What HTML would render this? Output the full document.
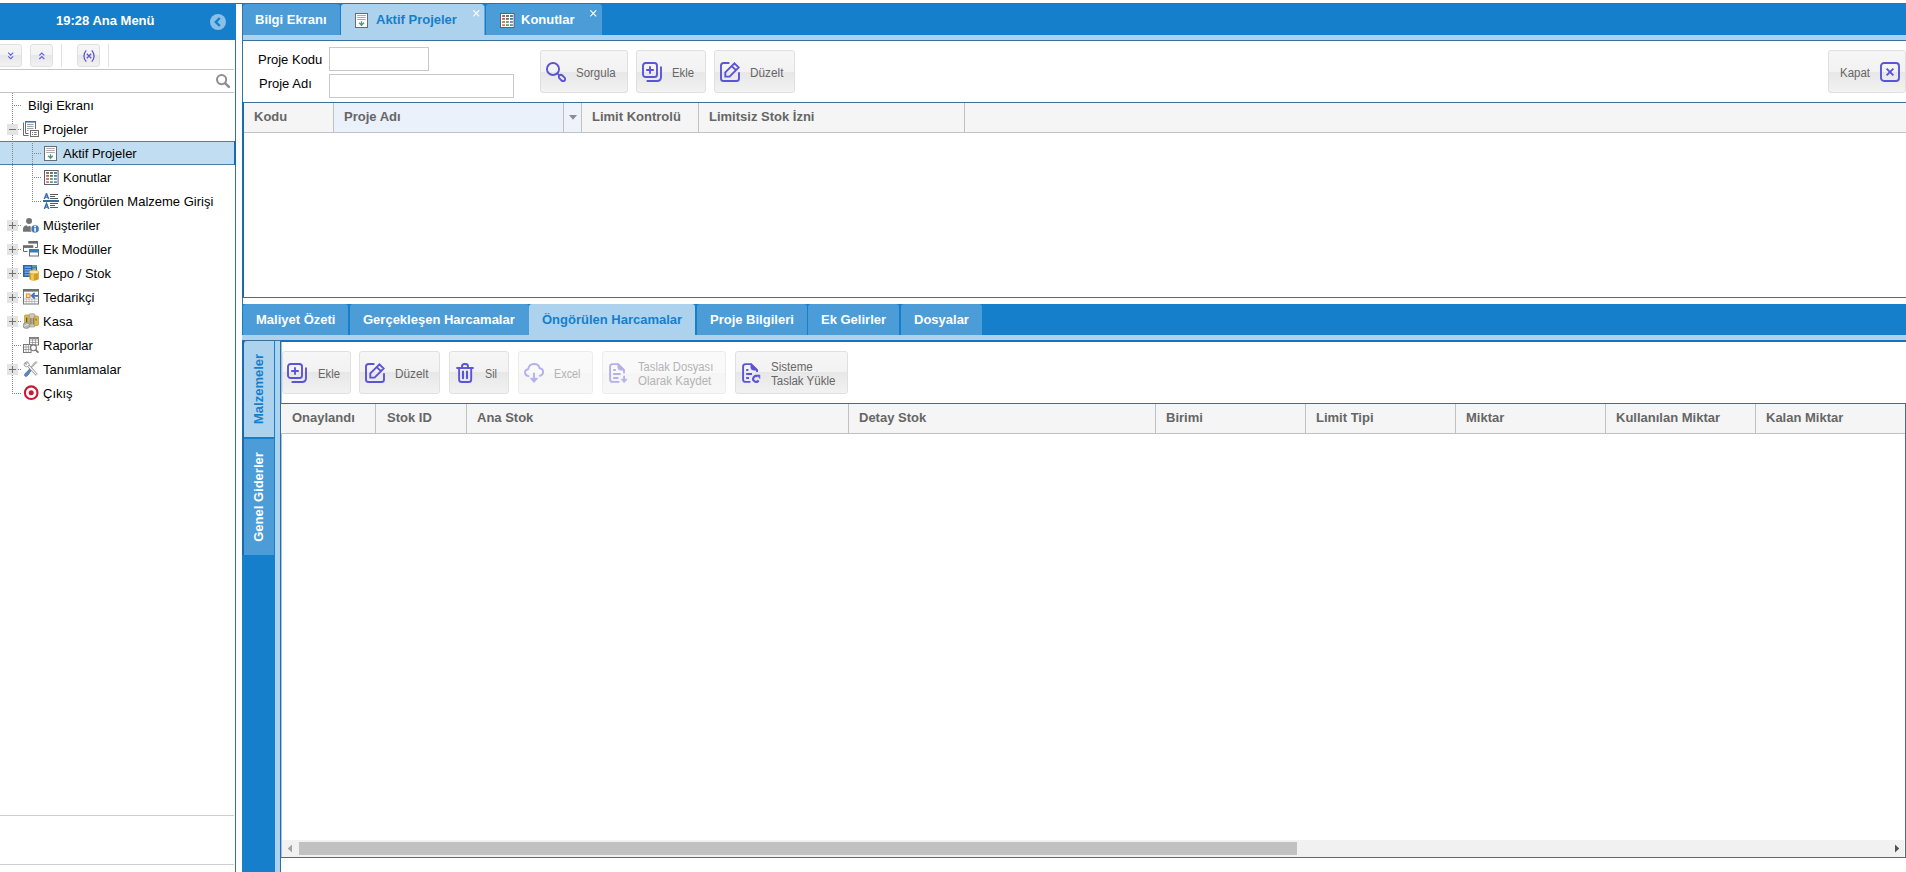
<!DOCTYPE html>
<html><head><meta charset="utf-8">
<style>
*{box-sizing:border-box;margin:0;padding:0}
html,body{width:1906px;height:872px;overflow:hidden;background:#fff;font-family:"Liberation Sans",sans-serif;font-size:13px;color:#000}
.a{position:absolute}
.blue{background:#157fcc}
.t13b{font-weight:bold;font-size:13px;line-height:16px;white-space:nowrap}
.tab{position:absolute;border-radius:3px 3px 0 0;background:#4b9cd7;color:#fff;font-weight:bold;font-size:13px;line-height:16px;white-space:nowrap}
.tab.act{background:#add2ed;color:#157fcc}
.tab span{position:absolute;top:8px}
.btn{position:absolute;border:1px solid #e0e0e0;border-radius:3px;background:linear-gradient(#f6f6f6 0,#f2f2f2 50%,#e7e7e7 50%,#f2f2f2 100%);height:43px}
.btn .tx{position:absolute;transform-origin:0 0;font-size:12px;color:#666;white-space:nowrap;line-height:13px}
.btn svg{position:absolute}
.btn.dis{background:linear-gradient(#fafafa 0,#f9f9f9 50%,#f5f5f5 51%,#f7f7f7 100%);border-color:#ececec}.btn.dis .tx{color:#b3b3b3}
.gh{position:absolute;background:#f5f5f5;border-top:1px solid #3b709a;border-bottom:1px solid #c1c1c1;height:31px}
.gh .c{position:absolute;top:0;height:29px;border-right:1px solid #c1c1c1;color:#666;font-weight:bold;font-size:13px;line-height:16px;padding:6px 0 0 10px;white-space:nowrap}
.tr{position:absolute;left:0;width:235px;height:24px;font-size:13px;line-height:16px;white-space:nowrap}
.tr .tx{position:absolute;top:5px}
.tr svg{position:absolute;top:4px}
.exp{position:absolute;left:7px;top:7px;width:11px;height:11px;background:#e4e4e4}
.exp:before{content:"";position:absolute;left:2px;top:5px;width:7px;height:1px;background:#707070}
.exp.plus:after{content:"";position:absolute;left:5px;top:2px;width:1px;height:7px;background:#707070}
.dv{position:absolute;width:1px;background-image:linear-gradient(#858585 50%,transparent 50%);background-size:1px 2px}
.dh{position:absolute;height:1px;background-image:linear-gradient(90deg,#858585 50%,transparent 50%);background-size:2px 1px}
.inp{position:absolute;border:1px solid #c9c9c9;background:#fff;height:24px}
</style></head><body>

<!-- LEFT PANEL -->
<div class="a blue" style="left:0;top:3px;width:236px;height:37px"></div>
<div class="a t13b" style="left:56px;top:13px;color:#fff">19:28 Ana Menü</div>
<svg class="a" style="left:210px;top:14px" width="16" height="16" viewBox="0 0 16 16"><circle cx="8" cy="8" r="8" fill="#8abfe6"/><path d="M9.8 4 L5.8 8 L9.8 12" fill="none" stroke="#157fcc" stroke-width="2.4"/></svg>
<div class="a" style="left:235px;top:40px;width:1px;height:832px;background:#3b709a"></div>
<div class="a" style="left:234px;top:141px;width:2px;height:24px;background:#186ab2"></div>
<!-- left toolbar -->
<div class="a" style="left:0;top:69px;width:234px;height:1px;background:#c6c6c6"></div>
<div class="btn" style="left:-2px;top:44px;width:24px;height:23px"></div>
<div class="btn" style="left:30px;top:44px;width:23px;height:23px"></div>
<div class="btn" style="left:77px;top:44px;width:23px;height:23px"></div>
<div class="a" style="left:61px;top:44px;width:1px;height:23px;background:#e1e1e1"></div>
<div class="a" style="left:108px;top:44px;width:1px;height:23px;background:#e1e1e1"></div>
<svg class="a" style="left:5px;top:50px" width="12" height="12" viewBox="0 0 12 12" fill="none" stroke="#655fe0" stroke-width="1.15"><path d="M3.2 2.7 L5.7 5.1 L8.2 2.7 M3.2 6.3 L5.7 8.7 L8.2 6.3"/></svg>
<svg class="a" style="left:36px;top:50px" width="12" height="12" viewBox="0 0 12 12" fill="none" stroke="#655fe0" stroke-width="1.15"><path d="M3.3 5.4 L5.8 3 L8.3 5.4 M3.3 9 L5.8 6.6 L8.3 9"/></svg>
<svg class="a" style="left:82px;top:49px" width="14" height="14" viewBox="0 0 14 14" fill="none" stroke="#5b55d6" stroke-width="1.25"><path d="M4.2 1.3 Q-.4 7 4.2 12.7 M9.8 1.3 Q14.4 7 9.8 12.7 M4.8 4.8 L9.2 9.2 M9.2 4.8 L4.8 9.2"/></svg>
<!-- search -->
<div class="a" style="left:0;top:92px;width:234px;height:1px;background:#c6c6c6"></div>
<svg class="a" style="left:215px;top:73px" width="16" height="16" viewBox="0 0 16 16" fill="none" stroke="#8e8e8e" stroke-linecap="round"><circle cx="6.6" cy="6.6" r="4.6" stroke-width="2"/><path d="M10.3 10.3 L13.9 13.9" stroke-width="2.5"/></svg>
<!-- bottom lines left -->
<div class="a" style="left:0;top:815px;width:234px;height:1px;background:#cfcfcf"></div>
<div class="a" style="left:0;top:864px;width:234px;height:1px;background:#cfcfcf"></div>

<!-- TREE -->
<div class="a" style="left:0;top:141px;width:234px;height:24px;background:#c1ddf1;border-top:1px solid #4b7fa8;border-bottom:1px solid #4b7fa8"></div>
<div class="dv" style="left:12px;top:93px;height:301px"></div>
<div class="dv" style="left:32px;top:141px;height:61px"></div>
<div class="tr" style="top:93px"><div class="dh" style="left:14px;top:12px;width:7px"></div><span class="tx" style="left:28px">Bilgi Ekranı</span></div>
<div class="tr" style="top:117px"><div class="exp "></div><div class="dh" style="left:18px;top:12px;width:3px"></div><svg style="left:23px" width="16" height="16" viewBox="0 0 16 16"><path d="M.5 1.5 V14.5 H5.5" fill="none" stroke="#6d6d6d"/><path d="M2.5 1 V12.5 H5.5 M12.5 1 V8" fill="none" stroke="#6d6d6d"/><rect x="2" y="0" width="11" height="1.6" fill="#4d72a6"/><path d="M4 3.5 H10.5 M4 5.5 H10.5 M4 7.5 H10.5 M4 9.5 H5.6" stroke="#8e96a6" stroke-width=".9"/><rect x="7.5" y="9.5" width="8" height="6" fill="#fff" stroke="#6d6d6d"/><path d="M9 11.5 H10 M9 13.5 H10 M11 11.5 H13.8 M11 13.5 H13.8" stroke="#6d6d6d" stroke-width=".9"/></svg><span class="tx" style="left:43px">Projeler</span></div>
<div class="tr" style="top:141px"><div class="dh" style="left:34px;top:12px;width:7px"></div><svg style="left:43px" width="16" height="16" viewBox="0 0 16 16"><rect x="1.5" y="1.5" width="12" height="14" fill="#fff" stroke="#666c74"/><path d="M3.2 3.5 H11.8 M3.2 5.5 H11.8 M3.2 7.5 H11.8" stroke="#9c9299" stroke-width=".8"/><path d="M7.5 9.2 V13 M5.1 10.7 L7.5 13.2 L9.9 10.7" fill="none" stroke="#4f9a78" stroke-width="1.35"/></svg><span class="tx" style="left:63px">Aktif Projeler</span></div>
<div class="tr" style="top:165px"><div class="dh" style="left:34px;top:12px;width:7px"></div><svg style="left:43px" width="16" height="16" viewBox="0 0 16 16"><rect x="1.5" y="1.5" width="13.6" height="14" fill="#fff" stroke="#566476"/><rect x="3.1" y="3.2" width="2.9" height="1.6" fill="#8a4a38"/><rect x="3.1" y="6.1" width="2.9" height="1.6" fill="#c8463a"/><rect x="3.1" y="9.2" width="2.9" height="1.6" fill="#a06a58"/><rect x="3.1" y="12.3" width="2.9" height="1.6" fill="#d0704a"/><rect x="7.0" y="3.2" width="2.9" height="1.6" fill="#3a5a40"/><rect x="7.0" y="6.1" width="2.9" height="1.6" fill="#3f6a48"/><rect x="7.0" y="9.2" width="2.9" height="1.6" fill="#5a8a6a"/><rect x="7.0" y="12.3" width="2.9" height="1.6" fill="#4f9070"/><rect x="11.0" y="3.2" width="2.9" height="1.6" fill="#3f5878"/><rect x="11.0" y="6.1" width="2.9" height="1.6" fill="#3868a0"/><rect x="11.0" y="9.2" width="2.9" height="1.6" fill="#5a7a98"/><rect x="11.0" y="12.3" width="2.9" height="1.6" fill="#5080a8"/></svg><span class="tx" style="left:63px">Konutlar</span></div>
<div class="tr" style="top:189px"><div class="dh" style="left:34px;top:12px;width:7px"></div><svg style="left:43px" width="16" height="16" viewBox="0 0 16 16"><path d="M1.3 6 L3.5 .5 L5.7 6 M2.3 4.1 H4.7 M1.3 16 L3.5 10.5 L5.7 16 M2.3 14.1 H4.7" fill="none" stroke="#3a6ea8" stroke-width="1.4"/><rect x="0" y="7" width="16" height="2" fill="#3a6a9a"/><path d="M7 1.5 H15 M7 3.5 H12 M7 5.5 H15 M7 10.5 H15 M7 12.5 H12 M7 14.5 H15" stroke="#5a5a5a" stroke-width="1"/></svg><span class="tx" style="left:63px">Öngörülen Malzeme Girişi</span></div>
<div class="tr" style="top:213px"><div class="exp plus"></div><div class="dh" style="left:18px;top:12px;width:3px"></div><svg style="left:23px" width="16" height="16" viewBox="0 0 16 16"><circle cx="6.05" cy="4.1" r="3" fill="#737373"/><path d="M0 14.8 V12.2 Q0 8.6 3.4 8.2 L5 9.8 L6.2 8.8 Q8.6 9.4 8.6 12 V14.8 Z" fill="#737373"/><circle cx="12.1" cy="11.9" r="4.1" fill="#3c7cb8" stroke="#fff" stroke-width=".7"/><rect x="11.3" y="10.8" width="1.6" height="3.8" fill="#fff"/><circle cx="12.1" cy="9.4" r=".95" fill="#fff"/></svg><span class="tx" style="left:43px">Müşteriler</span></div>
<div class="tr" style="top:237px"><div class="exp plus"></div><div class="dh" style="left:18px;top:12px;width:3px"></div><svg style="left:23px" width="16" height="16" viewBox="0 0 16 16"><rect x="5.3" y="0" width="9.7" height="2.6" fill="#6a6a6a"/><path d="M14.5 2 V6.5 H12" fill="none" stroke="#6a6a6a"/><rect x="0" y="4.2" width="10.3" height="2.7" fill="#6a6a6a"/><path d="M.5 6 V10.5 H4.5" fill="none" stroke="#6a6a6a"/><rect x="6.5" y="8.5" width="9" height="6.5" fill="#fff" stroke="#6a6a6a"/><rect x="6" y="8" width="10" height="3.5" fill="#3d7bb8"/></svg><span class="tx" style="left:43px">Ek Modüller</span></div>
<div class="tr" style="top:261px"><div class="exp plus"></div><div class="dh" style="left:18px;top:12px;width:3px"></div><svg style="left:23px" width="16" height="16" viewBox="0 0 16 16"><rect x="0" y="0" width="14" height="12" fill="#2f62a6"/><rect x="9" y="0" width="5" height="2" fill="#4aa3a8"/><path d="M1.5 2.2 H8 M1.5 4.7 H8 M1.5 7.2 H8 M1.5 9.7 H8" stroke="#6fa6ee" stroke-width="1.5"/><path d="M9.5 3.2 H13 M9.5 4.7 H13" stroke="#b8d0ee" stroke-width=".8"/><path d="M6.3 7 V14.3 Q11 17 15.8 14.3 V7 Z" fill="#d79c1c"/><path d="M8 7 V15.5 H11 V7Z" fill="#f3cf5c" opacity=".8"/><ellipse cx="11.05" cy="7" rx="4.75" ry="1.9" fill="#f6e6a0" stroke="#c8951c" stroke-width=".5"/></svg><span class="tx" style="left:43px">Depo / Stok</span></div>
<div class="tr" style="top:285px"><div class="exp plus"></div><div class="dh" style="left:18px;top:12px;width:3px"></div><svg style="left:23px" width="16" height="16" viewBox="0 0 16 16"><rect x=".5" y=".5" width="15" height="14.5" fill="#fff" stroke="#777"/><rect x="0" y="0" width="16" height="2.6" fill="#6e6e6e"/><rect x="3.4" y="5" width="3.6" height="3.6" fill="#fbe3c4" stroke="#f0862c" stroke-width="1.1"/><path d="M15.5 6.8 H10.5 M11.8 4 L8.8 6.8 L11.8 9.6" fill="none" stroke="#3f6fb8" stroke-width="1.8"/><path d="M1 10 H15 M1 12.5 H15" stroke="#999" stroke-width=".6"/><path d="M3.3 10 V15 M6.1 10 V15 M8.9 10 V15 M11.7 10 V15" stroke="#999" stroke-width=".6"/></svg><span class="tx" style="left:43px">Tedarikçi</span></div>
<div class="tr" style="top:309px"><div class="exp plus"></div><div class="dh" style="left:18px;top:12px;width:3px"></div><svg style="left:23px" width="16" height="16" viewBox="0 0 16 16"><rect x="1.5" y="2" width="5.5" height="10.5" rx="1" fill="#dcb94e" stroke="#a8893a" stroke-width=".6"/><rect x="3" y="4.5" width="1.3" height="5" fill="#6b5a2a"/><rect x="6.2" y=".8" width="5.8" height="13.2" rx="1" fill="#cfc9b4" stroke="#8f8a78" stroke-width=".6"/><rect x="7.3" y="5" width="1.2" height="6.5" fill="#77735f"/><rect x="9.7" y="5" width="1.2" height="6.5" fill="#77735f"/><rect x="11.2" y="3" width="4.3" height="9.5" rx="1" fill="#dcb94e" stroke="#a8893a" stroke-width=".6"/><rect x="12.5" y="5.5" width="1" height="2" fill="#6b5a2a"/><ellipse cx="3.4" cy="12.5" rx="3.4" ry="3" fill="#b4bcb4" stroke="#767c76" stroke-width=".6"/><path d="M1.5 13.5 L3 12 L5.5 11.5" fill="none" stroke="#eef2ee" stroke-width=".9"/></svg><span class="tx" style="left:43px">Kasa</span></div>
<div class="tr" style="top:333px"><div class="dh" style="left:14px;top:12px;width:7px"></div><svg style="left:23px" width="16" height="16" viewBox="0 0 16 16"><rect x="6.5" y=".5" width="9" height="7.5" fill="#fff" stroke="#777"/><path d="M6.5 3 H15.5 M6.5 5.5 H15.5 M9.5 .5 V8 M12.5 .5 V8" stroke="#8a8a8a" stroke-width=".7"/><rect x="6.5" y=".5" width="9" height="1.5" fill="#8a8a8a"/><rect x=".5" y="7.5" width="7.5" height="8" fill="#fff" stroke="#777"/><path d="M.5 10 H8 M.5 12.5 H8 M3 7.5 V15.5 M5.5 7.5 V15.5" stroke="#8a8a8a" stroke-width=".7"/><circle cx="10.5" cy="10.8" r="2.9" fill="#fff" stroke="#777" stroke-width="1.1"/><path d="M12.6 12.9 L15.4 15.7" stroke="#777" stroke-width="1.7"/></svg><span class="tx" style="left:43px">Raporlar</span></div>
<div class="tr" style="top:357px"><div class="exp plus"></div><div class="dh" style="left:18px;top:12px;width:3px"></div><svg style="left:23px" width="16" height="16" viewBox="0 0 16 16"><path d="M14.2 1.2 L12.6 1.6 L6.5 8" fill="none" stroke="#8a8a8a" stroke-width="1.7"/><path d="M14.2 1.2 L12.6 1.6 L6.5 8" fill="none" stroke="#fff" stroke-width=".6"/><path d="M6.6 8 L2 12.7 Q.6 14.6 2.3 15.4 Q4 15.8 5.2 14 L8.2 9.4 Z" fill="#5a87c4" stroke="#3a5f98" stroke-width=".6"/><path d="M5 4.5 L13.8 13.8" stroke="#8a8a8a" stroke-width="2.6"/><path d="M5 4.5 L13.6 13.6" stroke="#fff" stroke-width="1.2"/><path d="M2.3 1.2 Q.2 3 1.6 5 Q3.2 6.4 5.2 5.2 L6.2 3.6 Q5.5 .8 3.6 .6 L4 2.8 L2.8 3.6 Z" fill="#fff" stroke="#8a8a8a" stroke-width=".8"/></svg><span class="tx" style="left:43px">Tanımlamalar</span></div>
<div class="tr" style="top:381px"><div class="dh" style="left:14px;top:12px;width:7px"></div><svg style="left:23px" width="16" height="16" viewBox="0 0 16 16"><circle cx="8.2" cy="7.7" r="6.3" fill="#fff" stroke="#cd1733" stroke-width="2.1"/><circle cx="8.2" cy="7.7" r="2.5" fill="#cd1733"/></svg><span class="tx" style="left:43px">Çıkış</span></div>

<!-- MAIN TAB BAR -->
<div class="a blue" style="left:242px;top:3px;width:1664px;height:32px"></div>
<div class="a" style="left:242px;top:35px;width:1664px;height:5px;background:#add2ed"></div>
<div class="a" style="left:242px;top:40px;width:1664px;height:1px;background:#3b709a"></div>
<div class="tab" style="left:243px;top:4px;width:97px;height:31px"><span style="left:12px">Bilgi Ekranı</span></div>
<div class="tab act" style="left:341px;top:4px;width:143px;height:32px;border-radius:3px 3px 0 0"><span style="left:35px">Aktif Projeler</span></div>
<div class="tab" style="left:486px;top:4px;width:116px;height:31px"><span style="left:35px">Konutlar</span></div>
<svg class="a" style="left:473px;top:10px" width="7" height="7" viewBox="0 0 7 7" stroke="#fff" stroke-width="1.1"><path d="M.3 .3 L6.2 6.4 M6.2 .3 L.3 6.4"/></svg>
<svg class="a" style="left:590px;top:10px" width="7" height="7" viewBox="0 0 7 7" stroke="#fff" stroke-width="1.1"><path d="M.3 .3 L6.2 6.4 M6.2 .3 L.3 6.4"/></svg>

<svg class="a" style="left:354px;top:12px" width="16" height="16" viewBox="0 0 16 16"><rect x="1.5" y="1.5" width="12" height="14" fill="#fff" stroke="#666c74"/><path d="M3.2 3.5 H11.8 M3.2 5.5 H11.8 M3.2 7.5 H11.8" stroke="#9c9299" stroke-width=".8"/><path d="M7.5 9.2 V13 M5.1 10.7 L7.5 13.2 L9.9 10.7" fill="none" stroke="#4f9a78" stroke-width="1.35"/></svg>
<svg class="a" style="left:499px;top:12px" width="16" height="16" viewBox="0 0 16 16"><rect x="1.5" y="1.5" width="13.6" height="14" fill="#fff" stroke="#566476"/><rect x="3.1" y="3.2" width="2.9" height="1.6" fill="#8a4a38"/><rect x="3.1" y="6.1" width="2.9" height="1.6" fill="#c8463a"/><rect x="3.1" y="9.2" width="2.9" height="1.6" fill="#a06a58"/><rect x="3.1" y="12.3" width="2.9" height="1.6" fill="#d0704a"/><rect x="7.0" y="3.2" width="2.9" height="1.6" fill="#3a5a40"/><rect x="7.0" y="6.1" width="2.9" height="1.6" fill="#3f6a48"/><rect x="7.0" y="9.2" width="2.9" height="1.6" fill="#5a8a6a"/><rect x="7.0" y="12.3" width="2.9" height="1.6" fill="#4f9070"/><rect x="11.0" y="3.2" width="2.9" height="1.6" fill="#3f5878"/><rect x="11.0" y="6.1" width="2.9" height="1.6" fill="#3868a0"/><rect x="11.0" y="9.2" width="2.9" height="1.6" fill="#5a7a98"/><rect x="11.0" y="12.3" width="2.9" height="1.6" fill="#5080a8"/></svg>
<div class="a" style="left:484px;top:6px;width:1px;height:29px;background:#61a8dc"></div>
<!-- main left border -->
<div class="a" style="left:0;top:3px;width:1906px;height:1px;background:#3b709a"></div>
<div class="a" style="left:242px;top:3px;width:1px;height:869px;background:#3b709a"></div>
<div class="a" style="left:242px;top:102px;width:2px;height:196px;background:#186ab2"></div>
<div class="a" style="left:242px;top:340px;width:2px;height:215px;background:#186ab2"></div><div class="a blue" style="left:242px;top:555px;width:2px;height:317px"></div>

<!-- FORM -->
<div class="a" style="left:258px;top:52px;font-size:13px;line-height:16px">Proje Kodu</div>
<div class="a" style="left:259px;top:76px;font-size:13px;line-height:16px">Proje Adı</div>
<div class="inp" style="left:329px;top:47px;width:100px"></div>
<div class="inp" style="left:329px;top:74px;width:185px"></div>

<div class="btn" style="left:540px;top:50px;width:88px"><span class="tx" style="left:35px;top:16px;transform:scaleX(0.957)">Sorgula</span></div>
<div class="btn" style="left:636px;top:50px;width:70px"><span class="tx" style="left:35px;top:16px;transform:scaleX(0.94)">Ekle</span></div>
<div class="btn" style="left:714px;top:50px;width:81px"><span class="tx" style="left:35px;top:16px;transform:scaleX(0.985)">Düzelt</span></div>
<div class="btn" style="left:1828px;top:50px;width:78px"><span class="tx" style="left:11px;top:16px;transform:scaleX(0.957)">Kapat</span></div>

<svg class="a" style="left:546px;top:62px" width="20" height="20" viewBox="0 0 20 20" fill="none" stroke="#5b54d8" stroke-width="1.9" stroke-linecap="round" stroke-linejoin="round"><circle cx="7" cy="7" r="6.05"/><path d="M11.3 11.3 L13.4 13.4"/><rect x="-3.6" y="-2.1" width="7.2" height="4.2" rx="2.1" transform="translate(16 16) rotate(45)"/></svg><svg class="a" style="left:642px;top:62px" width="20" height="20" viewBox="0 0 20 20" fill="none" stroke="#5b54d8" stroke-width="1.9" stroke-linecap="round" stroke-linejoin="round"><rect x="1" y="1" width="14" height="14" rx="2.6" stroke-linecap="butt"/><path d="M4.2 8 H11.8 M8 4.2 V11.8 M19 4.4 V15 Q19 19 15 19 H4.6" stroke-linecap="butt"/></svg><svg class="a" style="left:720px;top:62px" width="20" height="20" viewBox="0 0 20 20" fill="none" stroke="#5b54d8" stroke-width="1.9" stroke-linecap="round" stroke-linejoin="round"><path d="M9.4 1 H3.6 Q1 1 1 3.6 V16.4 Q1 19 3.6 19 H16.4 Q19 19 19 16.4 V10.2" stroke-linecap="butt"/><path d="M14.5 1.3 L18.7 5.5 L9.6 14.6 H5.3 V10.4 Z M11.8 4.1 L15.9 8.2" stroke-linejoin="miter"/></svg><svg class="a" style="left:1880px;top:62px" width="20" height="20" viewBox="0 0 20 20" fill="none" stroke="#5b54d8" stroke-width="1.9" stroke-linecap="round" stroke-linejoin="round"><rect x="1" y="1" width="18" height="18" rx="3"/><path d="M6.6 6.6 L13.4 13.4 M13.4 6.6 L6.6 13.4" stroke-linecap="butt"/></svg>
<!-- GRID 1 -->
<div class="gh" style="left:244px;top:102px;width:1662px">
 <div class="c" style="left:0;width:90px">Kodu</div>
 <div class="c" style="left:90px;width:248px;background:#eaf1fb">Proje Adı</div>
 <div class="c" style="left:338px;width:117px">Limit Kontrolü</div>
 <div class="c" style="left:455px;width:266px">Limitsiz Stok İzni</div>
</div>
<div class="a" style="left:563px;top:103px;width:19px;height:29px;background:#eef3fb;border-left:1px solid #c1c1c1;border-right:1px solid #c1c1c1"></div>
<svg class="a" style="left:569px;top:115px" width="8" height="5" viewBox="0 0 8 5"><path d="M0 0 H8 L4 4.8Z" fill="#8c8c8c"/></svg>
<div class="a" style="left:242px;top:297px;width:1664px;height:1px;background:#3b709a"></div>

<!-- BOTTOM TAB BAR -->
<div class="a blue" style="left:242px;top:304px;width:1664px;height:31px"></div>
<div class="a" style="left:242px;top:335px;width:1664px;height:5px;background:#add2ed"></div>
<div class="a" style="left:242px;top:340px;width:1664px;height:1px;background:#3b709a"></div>
<div class="tab" style="left:243px;top:304px;width:105px;height:31px"><span style="left:13px">Maliyet Özeti</span></div>
<div class="tab" style="left:350px;top:304px;width:179px;height:31px"><span style="left:13px">Gerçekleşen Harcamalar</span></div>
<div class="tab act" style="left:529px;top:304px;width:166px;height:32px"><span style="left:13px">Öngörülen Harcamalar</span></div>
<div class="tab" style="left:697px;top:304px;width:110px;height:31px"><span style="left:13px">Proje Bilgileri</span></div>
<div class="tab" style="left:808px;top:304px;width:91px;height:31px"><span style="left:13px">Ek Gelirler</span></div>
<div class="tab" style="left:901px;top:304px;width:81px;height:31px"><span style="left:13px">Dosyalar</span></div>

<!-- VERTICAL TABS -->
<div class="a blue" style="left:244px;top:341px;width:31px;height:531px"></div>
<div class="a" style="left:275px;top:341px;width:5px;height:531px;background:#add2ed"></div>
<div class="a" style="left:280px;top:341px;width:1px;height:531px;background:#2a6da8"></div>
<div class="a" style="left:281px;top:341px;width:1px;height:517px;background:#9cc3e2"></div>
<div class="a" style="left:244px;top:341px;width:30px;height:96px;background:#add2ed;border-radius:3px 0 0 0"></div>
<div class="a" style="left:244px;top:439px;width:30px;height:116px;background:#4b9cd7"></div>
<div class="a t13b" style="left:224px;top:381px;width:70px;height:16px;color:#157fcc;transform:rotate(-90deg);text-align:center">Malzemeler</div>
<div class="a t13b" style="left:214px;top:489px;width:90px;height:16px;color:#fff;transform:rotate(-90deg);text-align:center">Genel Giderler</div>
<!-- scrollbar -->
<div class="a" style="left:282px;top:840px;width:1622px;height:17px;background:#f1f1f1"></div>
<div class="a" style="left:299px;top:842px;width:998px;height:13px;background:#c1c1c1"></div>
<svg class="a" style="left:287px;top:844px" width="6" height="9" viewBox="0 0 6 9"><path d="M5 .6 V8.4 L.8 4.5Z" fill="#a3a3a3"/></svg>
<svg class="a" style="left:1894px;top:844px" width="6" height="9" viewBox="0 0 6 9"><path d="M1 .6 V8.4 L5.2 4.5Z" fill="#505050"/></svg>
<div class="a" style="left:281px;top:857px;width:1625px;height:1px;background:#3b709a"></div>
<div class="a" style="left:1905px;top:403px;width:1px;height:455px;background:#3b709a;z-index:2"></div>
<div class="a" style="left:281px;top:341px;width:1625px;height:62px;overflow:hidden">
<div class="btn" style="left:1px;top:10px;width:69px"><span class="tx" style="left:34.5px;top:16px;transform:scaleX(0.94)">Ekle</span></div>
<div class="btn" style="left:78px;top:10px;width:81px"><span class="tx" style="left:35px;top:16px;transform:scaleX(0.985)">Düzelt</span></div>
<div class="btn" style="left:168px;top:10px;width:60px"><span class="tx" style="left:35px;top:16px;transform:scaleX(0.9)">Sil</span></div>
<div class="btn dis" style="left:237px;top:10px;width:75px"><span class="tx" style="left:34.5px;top:16px;transform:scaleX(0.903)">Excel</span></div>
<div class="btn dis" style="left:321px;top:10px;width:124px"><span class="tx" style="left:35px;top:9px;transform:scaleX(0.933)">Taslak Dosyası</span><span class="tx" style="left:35px;top:23px;transform:scaleX(0.964)">Olarak Kaydet</span></div>
<div class="btn" style="left:454px;top:10px;width:113px"><span class="tx" style="left:35px;top:9px;transform:scaleX(0.964)">Sisteme</span><span class="tx" style="left:35px;top:23px;transform:scaleX(0.959)">Taslak Yükle</span></div>
</div>
<svg class="a" style="left:287px;top:363px" width="20" height="20" viewBox="0 0 20 20" fill="none" stroke="#5b54d8" stroke-width="1.9" stroke-linecap="round" stroke-linejoin="round"><rect x="1" y="1" width="14" height="14" rx="2.6" stroke-linecap="butt"/><path d="M4.2 8 H11.8 M8 4.2 V11.8 M19 4.4 V15 Q19 19 15 19 H4.6" stroke-linecap="butt"/></svg><svg class="a" style="left:365px;top:363px" width="20" height="20" viewBox="0 0 20 20" fill="none" stroke="#5b54d8" stroke-width="1.9" stroke-linecap="round" stroke-linejoin="round"><path d="M9.4 1 H3.6 Q1 1 1 3.6 V16.4 Q1 19 3.6 19 H16.4 Q19 19 19 16.4 V10.2" stroke-linecap="butt"/><path d="M14.5 1.3 L18.7 5.5 L9.6 14.6 H5.3 V10.4 Z M11.8 4.1 L15.9 8.2" stroke-linejoin="miter"/></svg><svg class="a" style="left:455px;top:363px" width="20" height="20" viewBox="0 0 20 20" fill="none" stroke="#5b54d8" stroke-width="1.9" stroke-linecap="round" stroke-linejoin="round"><path d="M1.3 5 H18.7" stroke-linecap="butt"/><path d="M7 5 V3.5 Q7 1 9.5 1 H10.5 Q13 1 13 3.5 V5 M4.1 5 V16.4 Q4.1 19 6.7 19 H13.6 Q16.2 19 16.2 16.4 V5"/><path d="M8 8.6 V15.2 M12 8.6 V15.2" stroke-width="2.1"/></svg><svg class="a" style="left:524px;top:363px" width="20" height="20" viewBox="0 0 20 20" fill="none" stroke="#b5b0ec" stroke-width="1.9" stroke-linecap="round" stroke-linejoin="round"><path d="M4.4 13.2 Q1 12.4 1 9.6 Q1 6.6 4.2 6.2 Q5 1 10 1 Q14.8 1 15.6 5.2 Q19.1 5.6 19.1 9 Q19.1 12.2 15.8 12.9"/><path d="M10 10.4 V18"/><path d="M6.6 15.6 L10 19.4 L13.4 15.6 Z" fill="#b5b0ec" stroke-width="1"/></svg><svg class="a" style="left:608px;top:363px" width="20" height="20" viewBox="0 0 20 20" fill="none" stroke="#b5b0ec" stroke-width="1.9" stroke-linecap="round" stroke-linejoin="round"><path d="M11.4 18.9 H4.6 Q2.1 18.9 2.1 16.4 V3.6 Q2.1 1.1 4.6 1.1 H10 L16 7 V10.2" stroke-linecap="butt"/><path d="M10 1.1 V4.6 Q10 7 12.4 7 H16 Z" fill="#b5b0ec" stroke-width="1"/><path d="M5.2 7 H7.8 M5.2 11 H12.6 M5.2 15 H10.4" stroke-width="1.8" stroke-linecap="butt"/><path d="M16.1 13.4 V17"/><path d="M13.4 16.6 L16.1 19.6 L18.8 16.6 Z" fill="#b5b0ec" stroke-width=".8"/></svg><svg class="a" style="left:741px;top:363px" width="20" height="20" viewBox="0 0 20 20" fill="none" stroke="#5b54d8" stroke-width="1.9" stroke-linecap="round" stroke-linejoin="round"><path d="M9.4 18.9 H4.6 Q2.1 18.9 2.1 16.4 V3.6 Q2.1 1.1 4.6 1.1 H10 L16 7 V9" stroke-linecap="butt"/><path d="M10 1.1 V4.6 Q10 7 12.4 7 H16 Z" fill="#5b54d8" stroke-width="1"/><path d="M5.2 7 H7.4 M5.2 11 H11 M5.2 15 H8" stroke-width="1.8" stroke-linecap="butt"/><path d="M17.6 17.4 A2.9 2.9 0 1 1 16.6 13.4" stroke-width="2.1" stroke-linecap="butt"/><path d="M15.8 12 H18.9 V15.3 Z" fill="#5b54d8" stroke-width=".6"/></svg>
<div class="a" style="left:281px;top:340px;width:1625px;height:2px;background:#1c70b8"></div>
<!-- GRID 2 -->
<div class="gh g2" style="left:281px;top:403px;width:1625px">
 <div class="c" style="left:0px;width:95px;padding-left:11px">Onaylandı</div>
 <div class="c" style="left:95px;width:91px;padding-left:11px">Stok ID</div>
 <div class="c" style="left:186px;width:382px;padding-left:10px">Ana Stok</div>
 <div class="c" style="left:568px;width:307px;padding-left:10px">Detay Stok</div>
 <div class="c" style="left:875px;width:150px;padding-left:10px">Birimi</div>
 <div class="c" style="left:1025px;width:150px;padding-left:10px">Limit Tipi</div>
 <div class="c" style="left:1175px;width:150px;padding-left:10px">Miktar</div>
 <div class="c" style="left:1325px;width:150px;padding-left:10px">Kullanılan Miktar</div>
 <div class="c" style="left:1475px;width:150px;padding-left:10px">Kalan Miktar</div>
</div>
</div>

</body></html>
